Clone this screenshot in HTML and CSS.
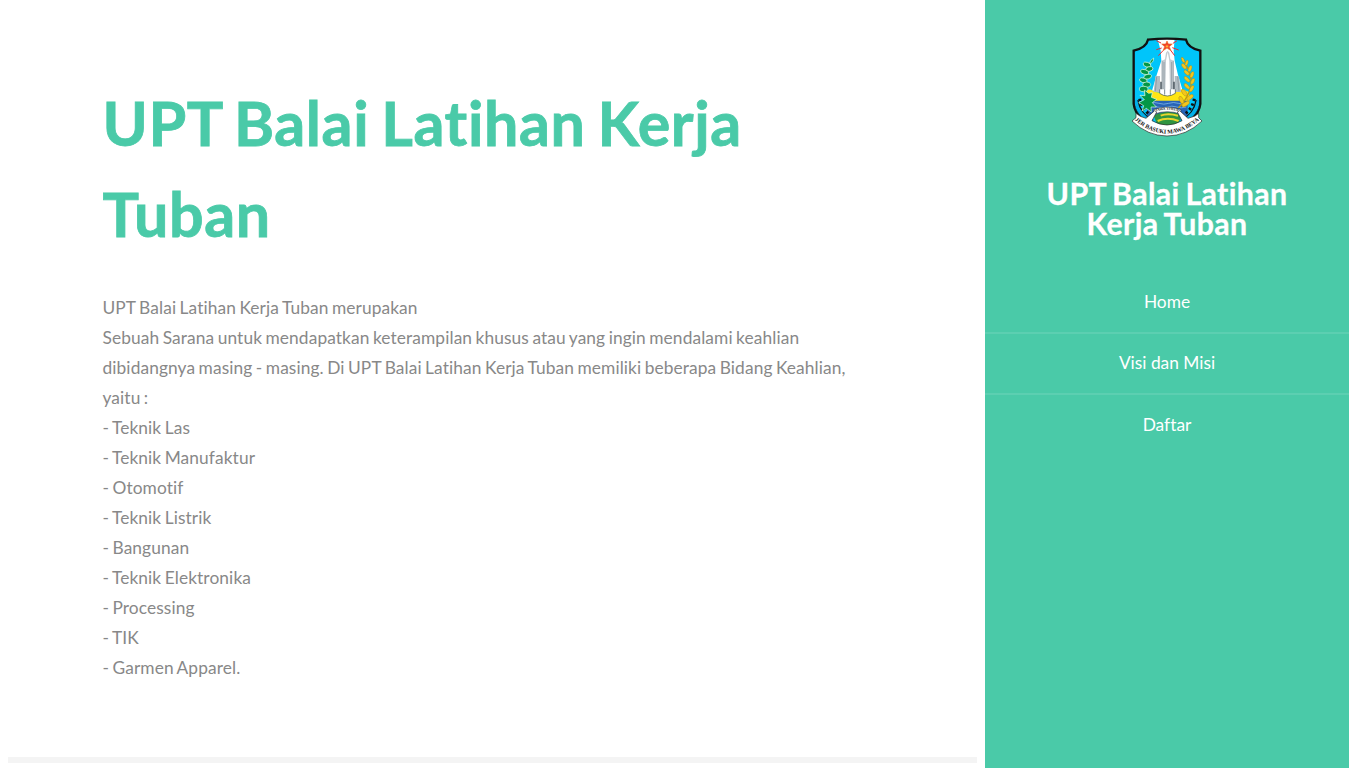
FILE: index.html
```html
<!DOCTYPE html>
<html lang="id">
<head>
<meta charset="utf-8">
<title>UPT Balai Latihan Kerja Tuban</title>
<link rel="stylesheet" href="styles.css">
</head>
<body>
<div class="page">
  <main class="main">
    <section class="intro">
      <h1 class="intro-title">UPT Balai Latihan Kerja Tuban</h1>
      <p class="intro-text">UPT Balai Latihan Kerja Tuban merupakan<br>
      Sebuah Sarana untuk mendapatkan keterampilan khusus atau yang ingin mendalami keahlian dibidangnya masing - masing. Di UPT Balai Latihan Kerja Tuban memiliki beberapa Bidang Keahlian, yaitu :<br>
      - Teknik Las<br>
      - Teknik Manufaktur<br>
      - Otomotif<br>
      - Teknik Listrik<br>
      - Bangunan<br>
      - Teknik Elektronika<br>
      - Processing<br>
      - TIK<br>
      - Garmen Apparel.</p>
    </section>
    <div class="divider"></div>
  </main>
  <aside class="sidebar">
    <svg class="crest" viewBox="0 0 270 342" role="img" aria-label="Jawa Timur">
      <defs>
        <clipPath id="shield"><path d="M78 29Q135 23 192 29Q197 53 235 62V222Q230 274 135 308Q40 274 35 222V62Q73 53 78 29Z"/></clipPath>
        <path id="motto" d="M36 268Q80 309 135 311Q190 309 234 268"/>
        <path id="region" d="M97 246Q135 232 174 246"/>
      </defs>
      <g clip-path="url(#shield)">
        <path fill="#00c5fa" d="M30 20H240V320H30Z"/>
        <path fill="#fff" d="M106 24H158L155 62L158 92L168 135L182 182H90L104 135L118 92L116 62Z"/>
        <path fill="#ffe514" d="M68 182L84 178L100 186L126 190L151 184L180 178L202 186V215H68Z"/>
        <path fill="#c4cbd0" d="M120 92L129 88L132 68L137 62L142 68L145 88L154 92V186H120Z"/>
        <path fill="#fff" d="M132 92L137 66L142 92L144 182H130Z"/>
        <path fill="#b3bcc2" d="M100 138H114V186H95ZM158 138H171L177 186H158Z"/>
        <path fill="none" stroke="#7e8b94" stroke-width="2" d="M120 92V186M154 92V186M126 96V186M149 96V186M104 140L100 184M167 140L171 184"/>
        <path fill="none" stroke="#36434c" stroke-width="4" d="M117 155V188M156 155V188"/>
        <path fill="#fff" d="M113 178H160V190Q136 206 113 190Z"/>
        <path fill="none" stroke="#354b5a" stroke-width="2" d="M113 178V190Q136 206 160 190V178M128 178V194M145 178V194"/>
        <path fill="#2864b7" d="M75 212H197V258H75Z"/>
        <path fill="none" stroke="#92c7f2" stroke-width="2" d="M82 220Q97 215 111 220T140 220T169 220T195 220M78 231Q92 226 106 231T135 231T164 231T193 231"/>
        <path fill="#2f9440" d="M95 257Q135 235 181 256L166 285H106Z"/>
        <path fill="none" stroke="#ead52c" stroke-width="6" d="M116 257Q137 248 168 257M107 273Q137 259 170 273"/>
        <g fill="none" stroke="#111" stroke-width="15"><path d="M42 211Q50 256 91 276"/><path d="M228 211Q220 256 179 276"/></g>
        <g fill="none" stroke="#02afe8" stroke-width="11"><path d="M40 210Q48 257 91 276"/><path d="M230 210Q222 257 179 276"/></g>
        <g fill="none" stroke="#111" stroke-width="9" stroke-dasharray="7 8"><path d="M53 206Q60 242 95 262"/><path d="M217 206Q210 242 175 262"/></g>
        <g fill="#049746" stroke="#e2ffe9" stroke-width="2">
          <path d="M95 84Q84 90 82 101Q95 99 95 84Z"/><ellipse cx="75" cy="104" rx="12" ry="7" transform="rotate(18 75 104)"/>
          <ellipse cx="82" cy="117" rx="11" ry="7" transform="rotate(-14 82 117)"/><ellipse cx="68" cy="126" rx="13" ry="7" transform="rotate(18 68 126)"/>
          <ellipse cx="77" cy="140" rx="12" ry="7" transform="rotate(-15 77 140)"/><ellipse cx="64" cy="151" rx="12" ry="7" transform="rotate(18 64 151)"/>
          <ellipse cx="74" cy="164" rx="12" ry="8"/><ellipse cx="65" cy="177" rx="13" ry="8"/>
          <path d="M67 180L80 190L91 188L88 202L104 208L91 218L103 231L87 231L88 246L73 235L60 243L65 227L50 218L67 209L54 196L69 197Z"/>
        </g>
        <path fill="none" stroke="#c29b10" stroke-width="4" d="M183 88Q220 145 201 187Q191 212 169 234"/>
        <g fill="#f3c51c" stroke="#8b7921" stroke-width="1">
          <ellipse cx="183" cy="90" rx="4" ry="9" transform="rotate(-25 183 90)"/><ellipse cx="194" cy="99" rx="4" ry="9" transform="rotate(20 194 99)"/>
          <ellipse cx="186" cy="109" rx="5" ry="10" transform="rotate(-40 186 109)"/><ellipse cx="204" cy="116" rx="5" ry="10" transform="rotate(20 204 116)"/>
          <ellipse cx="194" cy="128" rx="5" ry="10" transform="rotate(-45 194 128)"/><ellipse cx="210" cy="134" rx="5" ry="10" transform="rotate(20 210 134)"/>
          <ellipse cx="195" cy="148" rx="5" ry="11" transform="rotate(-45 195 148)"/><ellipse cx="212" cy="154" rx="5" ry="10" transform="rotate(25 212 154)"/>
          <ellipse cx="195" cy="169" rx="5" ry="11" transform="rotate(-45 195 169)"/><ellipse cx="209" cy="176" rx="5" ry="11" transform="rotate(30 209 176)"/>
          <ellipse cx="187" cy="188" rx="6" ry="12" transform="rotate(-35 187 188)"/><ellipse cx="204" cy="202" rx="6" ry="12" transform="rotate(50 204 202)"/>
          <ellipse cx="178" cy="210" rx="6" ry="12" transform="rotate(-25 178 210)"/><ellipse cx="191" cy="222" rx="6" ry="13" transform="rotate(60 191 222)"/>
        </g>
        <path fill="none" stroke="#e42b36" stroke-width="3" d="M117 39L103 32M119 54L103 59M123 62L109 77M151 53L170 60M146 61L158 77M153 40L165 32"/>
        <path fill="#f1382b" stroke="#ed7424" stroke-width="2" d="M135 33L139 42L151 42L142 50L147 62L135 54L123 62L128 50L119 42L131 42Z"/>
        <path fill="#ffb32e" d="M135 43L137 47L141 47L138 50L139 54L135 51L131 54L132 50L129 47L133 47Z"/>
      </g>
      <path fill="none" stroke="#111" stroke-width="7" d="M78 29Q135 23 192 29Q197 53 235 62V222Q230 274 135 308Q40 274 35 222V62Q73 53 78 29Z"/>
      <path fill="#fff" stroke="#252b2b" stroke-width="1.5" d="M95 239Q135 223 177 239L175 252Q136 238 97 252Z"/>
      <text class="crest-region"><textPath href="#region" startOffset="50%" text-anchor="middle">JAWA TIMUR</textPath></text>
      <path fill="#fff" stroke="#222" stroke-width="2" d="M42 250L55 259L72 265L98 242L104 246L90 272Q135 298 180 272L166 246L173 242L198 265L219 258L230 250L230 263L240 273Q193 318 135 318Q77 318 30 273L42 263Z"/>
      <text class="crest-motto"><textPath href="#motto" startOffset="50%" text-anchor="middle">JER BASUKI MAWA BEYA</textPath></text>
    </svg>
    <h2 class="sidebar-title">UPT Balai Latihan Kerja Tuban</h2>
    <nav class="nav">
      <a class="nav-link">Home</a>
      <a class="nav-link">Visi dan Misi</a>
      <a class="nav-link">Daftar</a>
    </nav>
  </aside>
</div>
</body>
</html>
```

FILE: styles.css
```css
* { box-sizing: border-box; }
body {
  margin: 0;
  overflow: hidden;
  background: #fff;
  color: #888;
  font-family: Lato, sans-serif;
  font-size: 17.333px;
  line-height: 30px;
  font-variant-ligatures: none;
}
.page { display: flex; width: 1349px; height: 768px; }
.main { width: 985px; padding: 0 8px; }
.intro { height: 757px; padding: 77px 94px 0 94.5px; }
.intro-title {
  margin: 0 0 34px;
  color: #4acaa8;
  font-size: 61px;
  line-height: 91px;
  font-weight: 700;
  letter-spacing: 0.6px;
  word-spacing: -3.5px;
  -webkit-text-stroke: 0.8px #4acaa8;
}
.intro-text { margin: 0; letter-spacing: 0.1px; word-spacing: -1.1px; }
.divider { height: 6px; background: #f4f4f4; }
.sidebar {
  display: flex;
  flex-direction: column;
  align-items: center;
  width: 364px;
  padding-top: 30px;
  background: #4acaa8;
  color: #fff;
  text-align: center;
}
.crest { display: block; width: 90px; height: 114px; }
.crest-motto { font: bold 17.5px "Liberation Serif", serif; fill: #111; }
.crest-region { font: bold 11px "Liberation Serif", serif; fill: #111; }
.sidebar-title {
  width: 260px;
  margin: 34px 0 33px;
  font-size: 30.333px;
  line-height: 30px;
  font-weight: 700;
  letter-spacing: 0.35px;
  word-spacing: -1.8px;
  -webkit-text-stroke: 0.3px #fff;
}
.nav { width: 100%; }
.nav-link { display: block; height: 61px; line-height: 62px; }
.nav-link + .nav-link { border-top: 2px solid #5ccfb1; line-height: 58px; }
.nav-link:last-child { line-height: 60px; }
```
